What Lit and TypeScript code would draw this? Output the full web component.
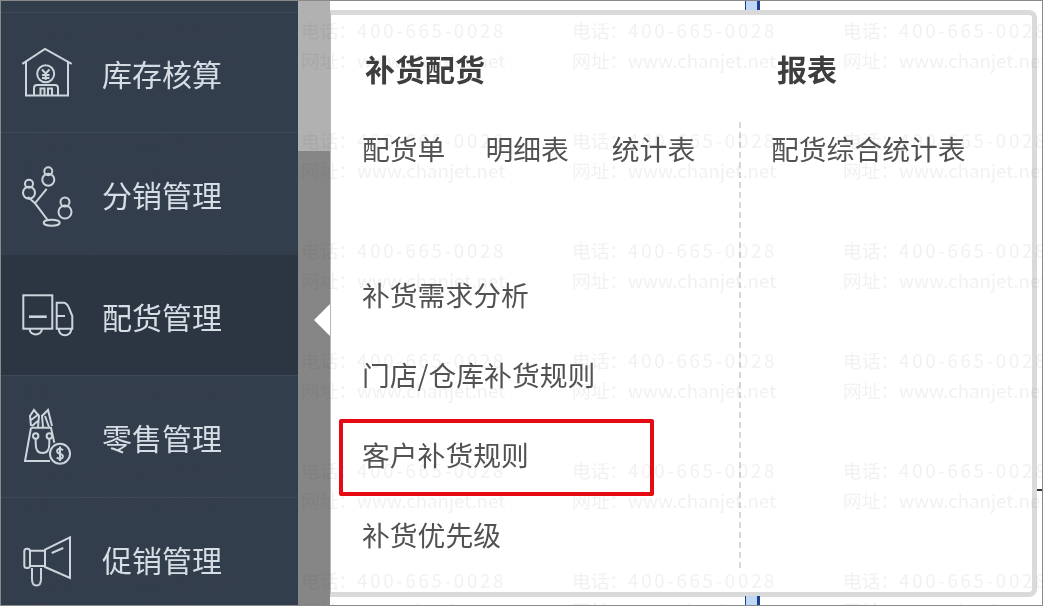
import { LitElement, html, css, svg } from "lit";
import { customElement } from "lit/decorators.js";

const icons = {
  stock: svg`<path d="M7.300 25.800L30 10.800L56.700 25.800M11 24V57.500H53V24"/><circle cx="30.700" cy="35.800" r="8.500"/><path d="M27 31.500L30.700 35.500L34.500 31.500M30.700 35.500V42M27 37H34.500M27 40H34.500"/><path d="M19 57.500V50Q19 47 22 47H40Q43 47 43 50V57.500M25.500 57.500V50.500H29.500V57.500M33 57.500V50.500H37V57.500"/>`,
  dist: svg`<circle cx="33.300" cy="12.200" r="4"/><circle cx="33.300" cy="20.800" r="6"/><circle cx="14" cy="24.800" r="4"/><circle cx="14" cy="33.800" r="6"/><circle cx="50" cy="43" r="4.500"/><circle cx="50" cy="53" r="6.500"/><path d="M31.700 29.800L20 44.200L33 61.500M13 38L20 44.200"/><ellipse cx="36.700" cy="63.800" rx="8" ry="3"/>`,
  truck: svg`<rect x="8.300" y="14.300" width="29" height="33.400"/><path d="M14 35.700H31.700" stroke-width="2.600"/><path d="M41.700 21.700H48.300Q52 21.700 54 27L57.300 35V47.700H41.700ZM41.700 35H50"/><path d="M14.500 48A6.300 6.300 0 0 0 27 48M43.700 48A6.300 6.300 0 0 0 56.300 48"/>`,
  bag: svg`<path d="M16 25.700L10 59H35M16 25.700H36L39.300 40.700"/><path d="M16 24L15 14L19 8L24 14L23 25M16 18L24 12M17 24L24 18M28 25L27 14L33 8L37 24M30 14L34 25"/><circle cx="20.700" cy="34" r="2.700"/><circle cx="34.300" cy="34" r="2.700"/><path d="M20.700 37V42Q20.700 51 27.500 51Q34.300 51 34.300 42V37"/><circle cx="45" cy="51.700" r="10"/><path d="M48 48.200Q45 45.500 42.500 47.700Q41 50.500 45 51.700Q49 53 47.500 55.700Q45 58 41.700 55.500M45 44.500V59"/>`,
  horn: svg`<g transform="translate(0 2)"><rect x="9.300" y="22.700" width="5.700" height="19.300" rx="2.500"/><path d="M15 24.700H30M15 40H30M30 23.700L55 11.300V52L30 41ZM36.700 27L48.300 22M17 42V53Q17 59.500 21.500 59.500Q26 59.500 26 53V42"/></g>`,
};

const menu: [string, keyof typeof icons, boolean][] = [
  ["库存核算", "stock", false],
  ["分销管理", "dist", false],
  ["配货管理", "truck", true],
  ["零售管理", "bag", false],
  ["促销管理", "horn", false],
];

const tiles = Array.from({ length: 24 }, (_, i) => i);

@customElement("app-root")
export class AppRoot extends LitElement {
  static styles = css`
    :host {
      display: block;
      width: 1043px;
      height: 606px;
      font-family: "Noto Sans CJK SC", "Noto Sans", sans-serif;
    }
    .frame {
      position: relative;
      width: 1043px;
      height: 606px;
      box-sizing: border-box;
      border: 1px solid #8a8a8a;
      overflow: hidden;
      display: flex;
      background: #fff;
    }
    .sidebar {
      width: 297px;
      flex: none;
      background: #333e4d;
      padding-top: 11px;
      box-sizing: border-box;
    }
    .row {
      height: 120px;
      box-sizing: border-box;
      border-top: 1px solid #3d4959;
      display: flex;
      align-items: center;
      color: #d6dde4;
      font-size: 30px;
      line-height: 1;
      filter: blur(0.35px);
    }
    .row:nth-child(2) { height: 123px; }
    .row:nth-child(4),
    .row:nth-child(5) { height: 122px; }
    .row.on {
      background: #2c3643;
      border-top-color: #2c3643;
    }
    .row svg {
      width: 65px;
      height: 70px;
      margin-left: 14px;
      margin-right: 22px;
      flex: none;
      fill: none;
      stroke: #cdd5dc;
      stroke-width: 2;
      overflow: visible;
    }
    .gutter {
      width: 32px;
      flex: none;
      display: flex;
      flex-direction: column;
      position: relative;
    }
    .g1 { height: 150px; background: #b1b1b1; }
    .g2 { flex: 1; background: #868686; }
    .arrow {
      position: absolute;
      right: 0;
      top: 303px;
      width: 0;
      height: 0;
      border: 16px solid transparent;
      border-right-color: #fff;
      border-left-width: 0;
    }
    .main {
      flex: 1;
      display: flex;
      flex-direction: column;
      padding: 9px 5px 8px 0;
      position: relative;
    }
    .panel {
      flex: 1;
      border: 5px solid #dadada;
      border-left-width: 1px;
      border-left-color: #b5b5b5;
      border-radius: 0 8px 8px 0;
      display: flex;
      color: #525252;
      font-size: 27.8px;
      line-height: 40px;
    }
    .col1 { width: 408px; flex: none; padding: 33px 0 0 31px; box-sizing: border-box; }
    .col2 { flex: 1; padding: 33px 0 0 32px; position: relative; }
    .divider {
      position: absolute;
      left: 0;
      top: 107px;
      bottom: 24px;
      width: 1.5px;
      background: repeating-linear-gradient(to bottom, #d6d6d6 0 6px, transparent 6px 10px);
    }
    h3 {
      margin: 0 0 40px 3px;
      font-size: 30px;
      font-weight: 700;
      line-height: 40px;
      color: #3e3e3e;
    }
    .col2 h3 { margin-left: 6px; }
    .links { display: flex; gap: 40px; }
    .links span:last-child { margin-left: 3px; }
    .stack { display: flex; flex-direction: column; gap: 40px; margin-top: 106px; }
    .text { filter: blur(0.3px); }
    .pin {
      position: absolute;
      left: 744px;
      width: 15px;
      height: 9px;
      box-sizing: border-box;
      background: #bfd8f5;
      border-left: 1px solid #1c3f8f;
      border-right: 3px solid #1c3f8f;
    }
    .pin.t { top: 0; }
    .pin.b { bottom: 0; }
    .mark {
      position: absolute;
      right: 0;
      top: 488px;
      width: 5px;
      height: 2px;
      background: #333;
    }
    .red {
      position: absolute;
      left: 338px;
      top: 418px;
      width: 315px;
      height: 77px;
      box-sizing: border-box;
      border: 4px solid #e60b12;
      border-radius: 2px;
    }
    .wm {
      position: absolute;
      inset: 0;
      pointer-events: none;
      display: grid;
      grid-template-columns: repeat(4, 271px);
      grid-auto-rows: 110px;
      margin: 14px 0 0 29px;
      font-size: 18.7px;
      line-height: 30px;
      color: rgba(70, 70, 70, 0.075);
      white-space: nowrap;
      filter: blur(0.3px);
    }
    .digits { letter-spacing: 2.7px; }
  `;

  render() {
    return html`<div class="frame">
      <div class="sidebar">
        ${menu.map(
          ([t, i, on]) => html`<div class="row ${on ? "on" : ""}">
            <svg viewBox="0 0 65 70">${icons[i]}</svg><span>${t}</span>
          </div>`
        )}
      </div>
      <div class="gutter">
        <div class="g1"></div>
        <div class="g2"></div>
        <div class="arrow"></div>
      </div>
      <div class="main">
        <div class="panel">
          <div class="col1 text">
            <h3>补货配货</h3>
            <div class="links"><span>配货单</span><span>明细表</span><span>统计表</span></div>
            <div class="stack">
              <span>补货需求分析</span>
              <span>门店/仓库补货规则</span>
              <span>客户补货规则</span>
              <span>补货优先级</span>
            </div>
          </div>
          <div class="col2">
            <div class="divider"></div>
            <div class="text">
              <h3>报表</h3>
              <div>配货综合统计表</div>
            </div>
          </div>
        </div>
      </div>
      <div class="pin t"></div>
      <div class="pin b"></div>
      <div class="mark"></div>
      <div class="red"></div>
      <div class="wm">
        ${tiles.map(
          () => html`<div>电话：<span class="digits">400-665-0028</span><br />网址：www.chanjet.net</div>`
        )}
      </div>
    </div>`;
  }
}
